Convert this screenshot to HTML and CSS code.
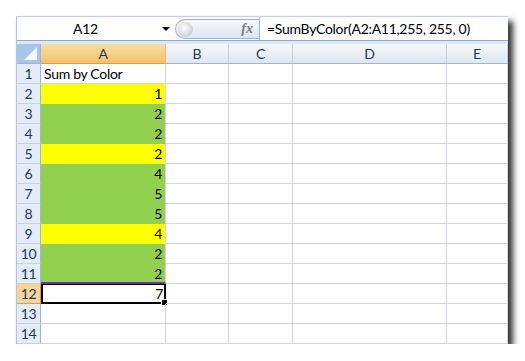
FILE: index.html
```html
<!DOCTYPE html>
<html lang="en">
<head>
    <meta charset="UTF-8">
    <title>Sum by Color</title>
    <link rel="stylesheet" href="styles.css">
</head>
<body>
    <div class="window">
        <div class="formula-bar">
            <div class="name-box">
                <span class="name">A12</span>
                <span class="arrow"></span>
            </div>
            <div class="fx-pill">
                <span class="knob"></span>
                <span class="fx">fx</span>
            </div>
            <div class="formula">=SumByColor(A2:A11,255, 255, 0)</div>
        </div>
        <div class="sheet">
            <div class="corner"><span class="tri"></span></div>
            <div class="col-head active">A</div>
            <div class="col-head">B</div>
            <div class="col-head">C</div>
            <div class="col-head">D</div>
            <div class="col-head">E</div>

            <div class="row-head">1</div><div class="cell text">Sum by Color</div><div class="cell"></div><div class="cell"></div><div class="cell"></div><div class="cell"></div>
            <div class="row-head">2</div><div class="cell yellow">1</div><div class="cell"></div><div class="cell"></div><div class="cell"></div><div class="cell"></div>
            <div class="row-head">3</div><div class="cell green">2</div><div class="cell"></div><div class="cell"></div><div class="cell"></div><div class="cell"></div>
            <div class="row-head">4</div><div class="cell green">2</div><div class="cell"></div><div class="cell"></div><div class="cell"></div><div class="cell"></div>
            <div class="row-head">5</div><div class="cell yellow">2</div><div class="cell"></div><div class="cell"></div><div class="cell"></div><div class="cell"></div>
            <div class="row-head">6</div><div class="cell green">4</div><div class="cell"></div><div class="cell"></div><div class="cell"></div><div class="cell"></div>
            <div class="row-head">7</div><div class="cell green">5</div><div class="cell"></div><div class="cell"></div><div class="cell"></div><div class="cell"></div>
            <div class="row-head">8</div><div class="cell green">5</div><div class="cell"></div><div class="cell"></div><div class="cell"></div><div class="cell"></div>
            <div class="row-head">9</div><div class="cell yellow">4</div><div class="cell"></div><div class="cell"></div><div class="cell"></div><div class="cell"></div>
            <div class="row-head">10</div><div class="cell green">2</div><div class="cell"></div><div class="cell"></div><div class="cell"></div><div class="cell"></div>
            <div class="row-head">11</div><div class="cell green range-end">2</div><div class="cell"></div><div class="cell"></div><div class="cell"></div><div class="cell"></div>
            <div class="row-head active">12</div><div class="cell selected">7<span class="handle"></span></div><div class="cell"></div><div class="cell"></div><div class="cell"></div><div class="cell"></div>
            <div class="row-head">13</div><div class="cell"></div><div class="cell"></div><div class="cell"></div><div class="cell"></div><div class="cell"></div>
            <div class="row-head">14</div><div class="cell"></div><div class="cell"></div><div class="cell"></div><div class="cell"></div><div class="cell"></div>
        </div>
    </div>
</body>
</html>
```

FILE: styles.css
```css
body {
    margin: 0;
    background: #fff;
    font-family: Lato, "Liberation Sans", sans-serif;
    font-size: 14px;
    letter-spacing: -0.3px;
    color: #000;
}
.window {
    margin: 16px 0 0 16px;
    width: 491px;
    border-left: 1px solid #b4c3d8;
    box-shadow: 5px 5px 6px rgba(0, 0, 0, 0.8);
    background: #fff;
}
.formula-bar {
    display: flex;
    height: 23px;
    border-top: 1px solid #c3d0e2;
    border-bottom: 1px solid #8eaad0;
    box-shadow: 0 3px 0 #dfe7f1;
    margin-bottom: 3px;
}
.name-box {
    width: 158px;
    display: flex;
    align-items: center;
}
.name {
    flex: 1;
    text-align: center;
    padding-right: 8px;
}
.arrow {
    width: 0;
    height: 0;
    border-left: 4px solid transparent;
    border-right: 4px solid transparent;
    border-top: 4px solid #000;
    margin-right: 5px;
}
.fx-pill {
    width: 84px;
    margin: 2px 0 1px;
    border: 1px solid #9fb2cc;
    border-right: none;
    border-radius: 11px 0 0 11px;
    background: linear-gradient(#f6f9fd, #dce5f1);
    display: flex;
    align-items: center;
    justify-content: space-between;
    padding: 0 6px 0 2px;
    box-sizing: border-box;
}
.knob {
    width: 15px;
    height: 15px;
    border-radius: 50%;
    background: radial-gradient(circle at 40% 40%, #ffffff, #c8d0da 70%, #a9b4c2);
}
.fx {
    font-family: "Liberation Serif", serif;
    font-style: italic;
    font-weight: bold;
    font-size: 14px;
    letter-spacing: 0;
    color: #7a7f86;
}
.formula {
    flex: 1;
    border-left: 1px solid #9fb2cc;
    padding-left: 7px;
    line-height: 23px;
}
.sheet {
    display: grid;
    grid-template-columns: 24px 125px 63px 64px 154px 61px;
    grid-auto-rows: 20px;
}
.corner {
    background: #a9c4e9;
    border-right: 1px solid #9eb6ce;
    border-bottom: 1px solid #9eb6ce;
    position: relative;
}
.tri {
    position: absolute;
    right: 3px;
    bottom: 3px;
    width: 0;
    height: 0;
    border-left: 13px solid transparent;
    border-bottom: 13px solid #f4f7fb;
}
.col-head, .row-head, .cell, .corner {
    box-sizing: border-box;
}
.col-head {
    background: linear-gradient(#f5f8fc, #dfe7f2);
    border-right: 1px solid #c5d2e2;
    border-bottom: 1px solid #9eb6ce;
    text-align: center;
    line-height: 19px;
    color: #1d3a5c;
}
.col-head.active {
    background: linear-gradient(#f9dca6, #f1c467);
    border-bottom: 1px solid #f29536;
    border-right: 1px solid #f2b96a;
}
.row-head {
    background: #e4ecf7;
    border-right: 1px solid #9eb6ce;
    border-bottom: 1px solid #c5d2e2;
    text-align: center;
    line-height: 19px;
    color: #1d3a5c;
}
.row-head.active {
    background: #f8d49a;
    border-right: 1px solid #f29536;
    border-bottom: 1px solid #f29536;
}
.cell {
    border-right: 1px solid #d0d7e5;
    border-bottom: 1px solid #d0d7e5;
    text-align: right;
    padding-right: 3px;
    line-height: 20px;
    position: relative;
}
.cell.text {
    text-align: left;
    padding-left: 3px;
}
.yellow {
    background: #ffff00;
    border-bottom-color: #ffff00;
}
.green {
    background: #92d050;
    border-bottom-color: #92d050;
}
.range-end {
    border-bottom: 2px solid #7030a0;
    line-height: 19px;
}
.selected {
    border: 2px solid #000;
    border-top-width: 1px;
    line-height: 17px;
    padding-right: 1px;
}
.handle {
    position: absolute;
    right: -4px;
    bottom: -4px;
    width: 5px;
    height: 5px;
    background: #000;
    border: 1px solid #fff;
}
```
